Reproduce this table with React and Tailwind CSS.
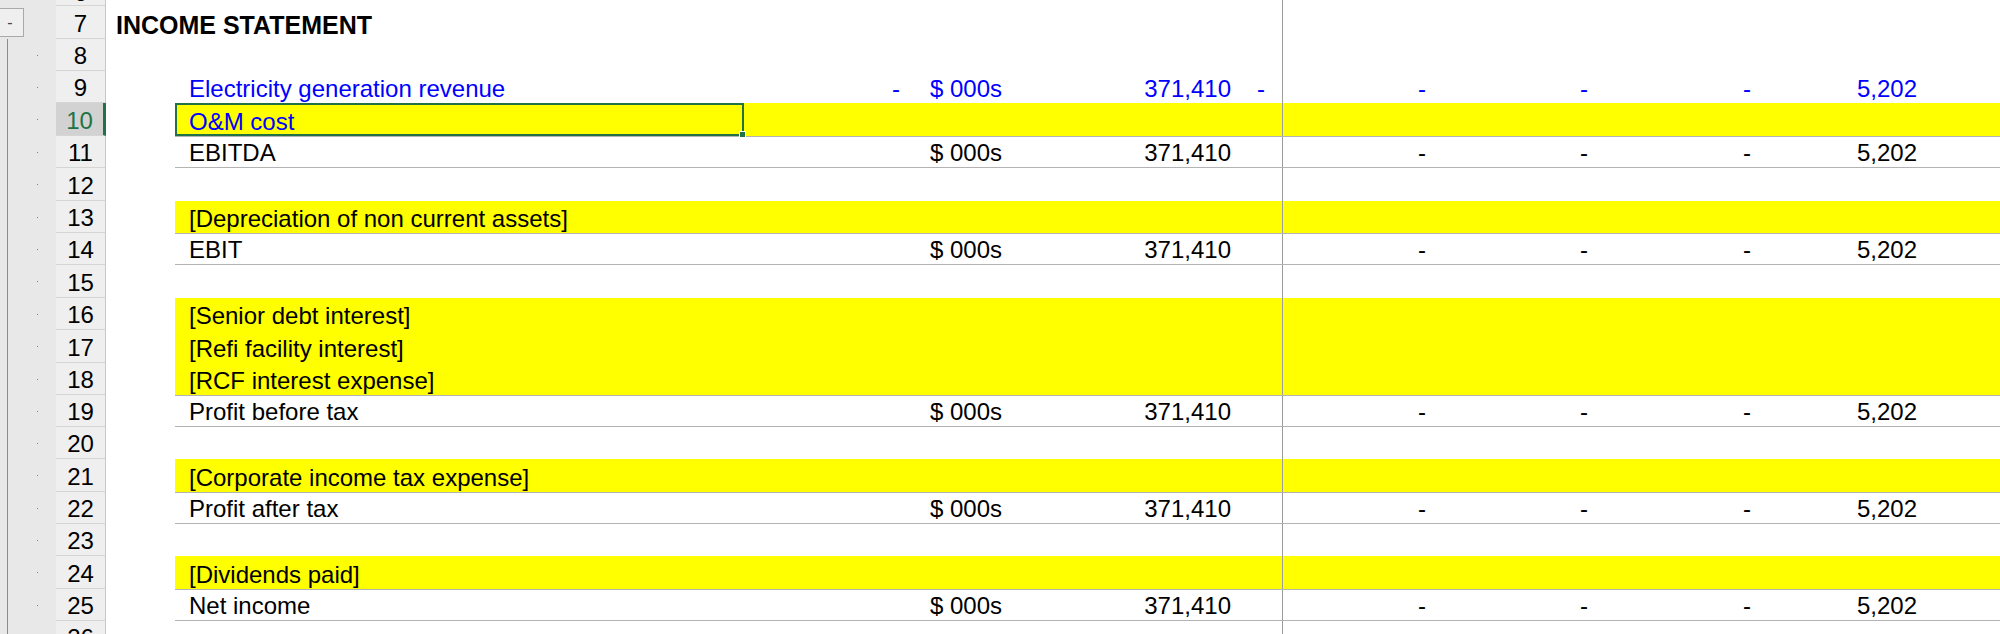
const years4 = ['-', '-', '-', '5,202'];

const rows = [
  { n: 7, h: 'h-[33px]', title: 'INCOME STATEMENT' },
  { n: 8, h: 'h-[32px]' },
  { n: 9, h: 'h-[32px]', label: 'Electricity generation revenue', blue: true, lead: '-', unit: '$ 000s', value: '371,410', tail: '-', years: years4 },
  { n: 10, h: 'h-[33px]', label: 'O&M cost', blue: true, fill: true, selected: true },
  { n: 11, h: 'h-[32px]', label: 'EBITDA', total: true, unit: '$ 000s', value: '371,410', years: years4 },
  { n: 12, h: 'h-[33px]' },
  { n: 13, h: 'h-[32px]', label: '[Depreciation of non current assets]', fill: true },
  { n: 14, h: 'h-[32px]', label: 'EBIT', total: true, unit: '$ 000s', value: '371,410', years: years4 },
  { n: 15, h: 'h-[33px]' },
  { n: 16, h: 'h-[32px]', label: '[Senior debt interest]', fill: true },
  { n: 17, h: 'h-[33px]', label: '[Refi facility interest]', fill: true },
  { n: 18, h: 'h-[32px]', label: '[RCF interest expense]', fill: true },
  { n: 19, h: 'h-[32px]', label: 'Profit before tax', total: true, unit: '$ 000s', value: '371,410', years: years4 },
  { n: 20, h: 'h-[32px]' },
  { n: 21, h: 'h-[33px]', label: '[Corporate income tax expense]', fill: true },
  { n: 22, h: 'h-[32px]', label: 'Profit after tax', total: true, unit: '$ 000s', value: '371,410', years: years4 },
  { n: 23, h: 'h-[32px]' },
  { n: 24, h: 'h-[33px]', label: '[Dividends paid]', fill: true },
  { n: 25, h: 'h-[32px]', label: 'Net income', total: true, unit: '$ 000s', value: '371,410', years: years4 },
  { n: 26, h: 'h-[32px]' },
];

function Gutter({ r }) {
  if (r.n === 7) {
    return (
      <div className="w-[56px] shrink-0 bg-[#e8e8e8] pt-[2px]">
        <div className="-ml-[4px] w-[28px] h-[29px] border border-[#a9a9a9] bg-[#efefef] flex items-center justify-center text-[16px] leading-none text-[#444]">-</div>
      </div>
    );
  }
  return (
    <div className="w-[56px] shrink-0 flex items-center bg-[#e8e8e8]">
      <div className="ml-[7px] w-px self-stretch bg-[#8c8c8c]" />
      <div className="ml-[29px] w-px h-px bg-[#808080]" />
    </div>
  );
}

function Cell({ children, className = '' }) {
  return (
    <div className={`flex items-end whitespace-nowrap leading-[24px] pb-[2px] ${className}`}>
      {children}
    </div>
  );
}

function Row({ r }) {
  const color = r.blue ? 'text-[#0000ff]' : 'text-black';
  const years = r.years || ['', '', '', ''];
  const active = r.selected;
  return (
    <div className={`flex ${r.h}`}>
      <Gutter r={r} />
      <div
        className={`w-[50px] shrink-0 flex items-end justify-center border-b border-[#d5d5d5] ${
          active ? 'bg-[#d2d2d2] text-[#217346] border-r-[3px] border-r-[#217346]' : 'bg-[#efefef] text-black border-r border-r-[#c8c8c8]'
        }`}
      >
        <span className="leading-[24px] pb-[2px]">{r.n}</span>
      </div>
      <Cell className="w-[69px] shrink-0 pl-[10px] font-bold text-[25px]">{r.title}</Cell>
      <div
        className={`flex-1 grid grid-cols-[569px_168px_138px_195px_37px_158px_162px_163px_166px_1fr] ${color} ${
          r.fill ? 'bg-[#ffff00]' : ''
        } ${r.total ? 'border-y border-[#b3b3b3]' : ''}`}
      >
        <Cell className="relative pl-[14px]">
          {r.label}
          {active && (
            <div className="absolute inset-0 border-2 border-[#217346]">
              <div className="absolute -right-[4px] -bottom-[4px] w-[7px] h-[7px] bg-[#217346] border border-white" />
            </div>
          )}
        </Cell>
        <Cell className="justify-end pr-[12px]">{r.lead}</Cell>
        <Cell className="pl-[18px]">{r.unit}</Cell>
        <Cell className="justify-end pr-[14px]">{r.value}</Cell>
        <Cell className="pl-[12px]">{r.tail}</Cell>
        {years.map((y, i) => (
          <Cell key={i} className={`justify-end pr-[14px] ${i === 0 ? 'border-l border-[#9c9c9c]' : ''}`}>{y}</Cell>
        ))}
        <div />
      </div>
    </div>
  );
}

export default function App() {
  return (
    <div className="h-[634px] w-[2000px] overflow-hidden bg-white text-[24px] font-['Liberation_Sans',Arial,sans-serif]">
      <div className="flex h-[6px]">
        <div className="w-[56px] shrink-0 bg-[#e8e8e8]" />
        <div className="w-[50px] shrink-0 flex items-end justify-center overflow-hidden bg-[#efefef] border-b border-[#d5d5d5] border-r border-r-[#c8c8c8]">
          <span className="leading-[24px]">6</span>
        </div>
        <div className="w-[69px] shrink-0" />
        <div className="flex-1 grid grid-cols-[569px_168px_138px_195px_37px_158px_162px_163px_166px_1fr]">
          <div /><div /><div /><div /><div />
          <div className="border-l border-[#9c9c9c]" />
        </div>
      </div>
      {rows.map(r => (
        <Row key={r.n} r={r} />
      ))}
    </div>
  );
}
